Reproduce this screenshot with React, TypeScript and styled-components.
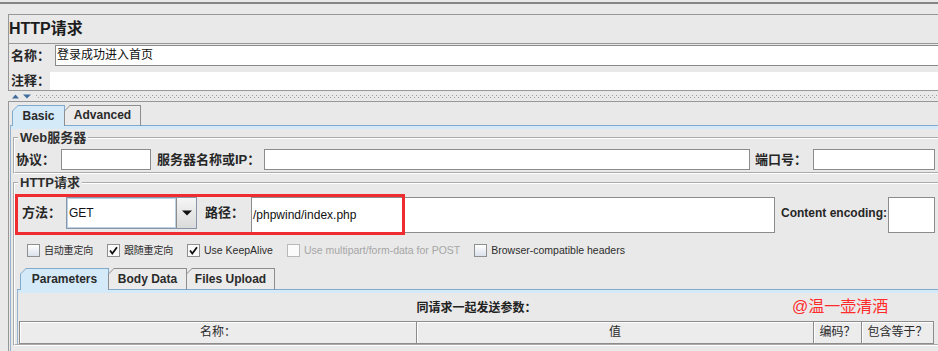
import React from 'react'
import styled, { createGlobalStyle } from 'styled-components'

const GlobalStyle = createGlobalStyle`
    html, body {
        margin: 0;
        padding: 0;
        background: #e9e9e9;
        overflow: hidden;
    }

    body {
        font-family: "Liberation Sans", "Noto Sans CJK SC", sans-serif;
        color: #222;
    }
`

const Page = styled.div`
    width: 950px;
    height: 351px;
    overflow: hidden;
    padding-top: 2px;
    box-sizing: border-box;
    display: flex;
    flex-direction: column;
`

const TopRule = styled.div`
    height: 2px;
    background: #858585;
    margin-bottom: 10px;
`

const HeaderPanel = styled.div`
    margin-left: 8px;
    border-left: 1px solid #979797;
    border-top: 1px solid #979797;
`

const Title = styled.div`
    height: 28px;
    line-height: 28px;
    font-size: 16px;
    font-weight: bold;
    color: #1c1c1c;
`

const FormBox = styled.div`
    border-top: 1px solid #979797;
    border-bottom: 1px solid #979797;
    padding-left: 2px;
`

const FormRow = styled.div<{ $top: number; $h: number }>`
    display: flex;
    align-items: center;
    margin-top: ${({ $top }) => $top}px;
    height: ${({ $h }) => $h}px;
`

const Label = styled.span<{ $w: number; $ml?: number; $size?: number }>`
    flex: none;
    width: ${({ $w }) => $w}px;
    margin-left: ${({ $ml }) => $ml ?? 0}px;
    font-size: ${({ $size }) => $size ?? 13}px;
    font-weight: bold;
    color: #262626;
    white-space: nowrap;
    line-height: 16px;
`

const NameInput = styled.div`
    flex: 1;
    height: 100%;
    box-sizing: border-box;
    background: #fff;
    border: 1px solid #8a8a8a;
    border-right: none;
    font-size: 12px;
    line-height: 19px;
    padding-left: 1px;
    color: #111;
`

const CommentArea = styled.div`
    flex: 1;
    height: 100%;
    background: #fff;
`

const Splitter = styled.div`
    height: 10px;
    margin-left: 8px;
    padding-left: 4px;
    display: flex;
    align-items: center;
    gap: 4px;
`

const Dots = styled.div`
    flex: 1;
    height: 3px;
    margin-top: 1px;
    background-image: linear-gradient(90deg, #9c9c9c 1px, transparent 1px),
        linear-gradient(90deg, #9c9c9c 1px, transparent 1px);
    background-size: 4px 1px, 4px 1px;
    background-position: 0 0, 2px 2px;
    background-repeat: repeat-x;
`

const LowerPanel = styled.div`
    flex: 1;
    margin-left: 8px;
    border-left: 1px solid #979797;
    border-top: 1px solid #979797;
    padding-top: 3px;
    display: flex;
    flex-direction: column;
`

const TabStrip = styled.div<{ $pl: number }>`
    display: flex;
    align-items: flex-end;
    padding-left: ${({ $pl }) => $pl}px;
    margin-bottom: -1px;
    position: relative;
    z-index: 1;
`

const TabOuter = styled.div<{ $w: number; $h: number; $active?: boolean }>`
    width: ${({ $w }) => $w}px;
    height: ${({ $h }) => $h}px;
    box-sizing: border-box;
    padding: 1px 1px 0 1px;
    margin-right: -1px;
    background: ${({ $active }) => ($active ? '#82a8cc' : '#8e8e8e')};
    clip-path: polygon(6px 0, 100% 0, 100% 100%, 0 100%, 0 6px);
`

const TabFace = styled.div<{ $active?: boolean }>`
    height: 100%;
    box-sizing: border-box;
    background: ${({ $active }) => ($active ? '#d4eaf9' : '#ebebeb')};
    border-bottom: ${({ $active }) => ($active ? 'none' : '1px solid #82a8cc')};
    clip-path: polygon(5px 0, 100% 0, 100% 100%, 0 100%, 0 5px);
    display: flex;
    align-items: center;
    justify-content: center;
    font-size: 12px;
    font-weight: bold;
    color: #2a2a2a;
    padding-bottom: 1px;
`

const Pane = styled.div<{ $ml: number }>`
    flex: 1;
    margin-left: ${({ $ml }) => $ml}px;
    border-top: 1px solid #82a8cc;
    border-left: 1px solid #98b2cb;
    box-shadow: inset 0 3px 0 #d4eaf9;
    display: flex;
    flex-direction: column;
`

const BasicPane = styled(Pane)`
    padding-left: 2px;
`

const Group = styled.fieldset<{ $top: number; $pb?: number }>`
    margin: ${({ $top }) => $top}px 0 0 0;
    padding: 0 0 ${({ $pb }) => $pb ?? 0}px 0;
    min-width: 0;
    border: 2px groove #ffffff;
    border-right: none;
    display: flex;
    flex-direction: column;
`

const Legend = styled.legend`
    margin-left: 3px;
    padding: 0 2px;
    font-size: 13px;
    line-height: 13px;
    font-weight: bold;
    color: #2e2e2e;
`

const Row = styled.div<{ $top: number; $h: number; $pl: number }>`
    position: relative;
    display: flex;
    align-items: center;
    margin-top: ${({ $top }) => $top}px;
    height: ${({ $h }) => $h}px;
    padding-left: ${({ $pl }) => $pl}px;
`

const Field = styled.div<{ $w: number; $h: number }>`
    flex: none;
    align-self: flex-start;
    width: ${({ $w }) => $w}px;
    height: ${({ $h }) => $h}px;
    box-sizing: border-box;
    background: #fff;
    border: 1px solid #8c8c8c;
    font-size: 12px;
    line-height: ${({ $h }) => $h - 2}px;
    padding-left: 1px;
    color: #111;
`

const CenterLabel = styled(Label)`
    align-self: flex-start;
    height: 32px;
    line-height: 32px;
`

const Combo = styled.div`
    flex: none;
    align-self: flex-start;
    display: flex;
    width: 131px;
    height: 32px;
    box-sizing: border-box;
    border: 1px solid #8796a8;
`

const ComboText = styled.div`
    flex: 1;
    background: #fff;
    border: 1px solid #bcd0e4;
    font-size: 12px;
    line-height: 28px;
    padding-left: 1px;
    color: #111;
`

const ComboButton = styled.div`
    width: 19px;
    border-left: 1px solid #8c8c8c;
    background: linear-gradient(#f5f5f5, #dadada);
    display: flex;
    align-items: center;
    justify-content: center;
`

const Annotation = styled.div`
    position: absolute;
    left: 0;
    top: -3px;
    width: 390px;
    height: 41px;
    box-sizing: border-box;
    border: 3px solid #ef2d30;
    pointer-events: none;
`

const OptionRow = styled.div`
    display: flex;
    align-items: center;
    margin-top: 11px;
    height: 13px;
    padding-left: 12px;
    gap: 14px;
`

const Option = styled.label<{ $disabled?: boolean }>`
    display: flex;
    align-items: center;
    gap: 4px;
    font-size: 10.5px;
    line-height: 13px;
    color: ${({ $disabled }) => ($disabled ? '#a6a6a6' : '#2c2c2c')};
    white-space: nowrap;
`

const CjkText = styled.span`
    font-size: 10px;
    letter-spacing: -0.2px;
`

const Box = styled.span<{ $checked?: boolean; $disabled?: boolean }>`
    width: 13px;
    height: 13px;
    box-sizing: border-box;
    border: 1px solid ${({ $disabled }) => ($disabled ? '#b9b9b9' : '#8e8f8f')};
    background: ${({ $checked, $disabled }) =>
        $checked || $disabled ? '#fbfbfb' : 'linear-gradient(#ffffff, #dbe2ec)'};
    display: flex;
    align-items: center;
    justify-content: center;
`

const Params = styled.div`
    flex: 1;
    margin-top: 11px;
    margin-left: 2px;
    display: flex;
    flex-direction: column;
`

const ParamsBody = styled(Pane)`
    position: relative;
    padding-top: 10px;
`

const Caption = styled.div`
    width: 915px;
    margin-left: 1px;
    height: 16px;
    line-height: 16px;
    text-align: center;
    font-size: 12px;
    font-weight: bold;
    color: #222;
    margin-bottom: 5px;
`

const Watermark = styled.div`
    position: absolute;
    left: 774px;
    top: 7px;
    font-size: 16px;
    line-height: 20px;
    color: #ff2b2b;
    white-space: nowrap;
`

const TableHead = styled.div`
    display: flex;
    width: 915px;
    margin-left: 1px;
    height: 23px;
    box-sizing: border-box;
    border: 1px solid #8c8c8c;
    border-right: none;
    background: #ececec;
`

const HeadCell = styled.div<{ $w: number }>`
    width: ${({ $w }) => $w}px;
    box-sizing: border-box;
    border-right: 1px solid #8c8c8c;
    box-shadow: inset 1px 1px 0 #fff;
    text-align: center;
    font-size: 12px;
    line-height: 21px;
    color: #2a2a2a;
`

const TableBody = styled.div`
    flex: 1;
    width: 915px;
    margin-left: 1px;
    box-sizing: border-box;
    border-left: 1px solid #8c8c8c;
    border-right: 1px solid #8c8c8c;
`

const Tab = ({ label, w, h, active }: { label: string; w: number; h: number; active?: boolean }) => (
    <TabOuter $w={w} $h={h} $active={active}>
        <TabFace $active={active}>{label}</TabFace>
    </TabOuter>
)

const Check = ({ checked, disabled, children }: { checked?: boolean; disabled?: boolean; children: React.ReactNode }) => (
    <Option $disabled={disabled}>
        <Box $checked={checked} $disabled={disabled}>
            {checked && (
                <svg width="9" height="9" viewBox="0 0 9 9">
                    <path d="M1 4.5 L3.3 7.5 L8 1.2" fill="none" stroke="#111" strokeWidth="1.8" />
                </svg>
            )}
        </Box>
        {children}
    </Option>
)

const App = () => {
    return (
        <>
            <GlobalStyle />
            <Page>
                <TopRule />
                <HeaderPanel>
                    <Title>HTTP请求</Title>
                    <FormBox>
                        <FormRow $top={1} $h={21}>
                            <Label $w={44}>名称：</Label>
                            <NameInput>登录成功进入首页</NameInput>
                        </FormRow>
                        <FormRow $top={6} $h={18}>
                            <Label $w={39}>注释：</Label>
                            <CommentArea />
                        </FormRow>
                    </FormBox>
                </HeaderPanel>

                <Splitter>
                    <svg width="20" height="5" viewBox="0 0 20 5">
                        <polygon points="0,4.5 3.5,0.5 7,4.5" fill="#416d9c" />
                        <polygon points="11,0.5 19,0.5 15,4.5" fill="#416d9c" />
                    </svg>
                    <Dots />
                </Splitter>

                <LowerPanel>
                    <TabStrip $pl={3}>
                        <Tab label="Basic" w={53} h={21} active />
                        <Tab label="Advanced" w={77} h={21} />
                    </TabStrip>
                    <BasicPane $ml={1}>
                        <Group $top={5} $pb={2}>
                            <Legend>Web服务器</Legend>
                            <Row $top={5} $h={21} $pl={1}>
                                <Label $w={45}>协议：</Label>
                                <Field $w={90} $h={21} />
                                <Label $w={107} $ml={6}>服务器名称或IP：</Label>
                                <Field $w={486} $h={21} />
                                <Label $w={58} $ml={5}>端口号：</Label>
                                <Field $w={122} $h={21} />
                            </Row>
                        </Group>

                        <Group $top={2}>
                            <Legend>HTTP请求</Legend>
                            <Row $top={8} $h={36} $pl={7}>
                                <CenterLabel $w={44}>方法：</CenterLabel>
                                <Combo>
                                    <ComboText>GET</ComboText>
                                    <ComboButton>
                                        <svg width="10" height="6" viewBox="0 0 10 6">
                                            <polygon points="0,0.5 10,0.5 5,5.5" fill="#111" />
                                        </svg>
                                    </ComboButton>
                                </Combo>
                                <CenterLabel $w={46} $ml={8}>路径：</CenterLabel>
                                <Field $w={524} $h={36}>/phpwind/index.php</Field>
                                <CenterLabel $w={107} $ml={6} $size={12}>Content encoding:</CenterLabel>
                                <Field $w={47} $h={36} />
                                <Annotation />
                            </Row>

                            <OptionRow>
                                <Check><CjkText>自动重定向</CjkText></Check>
                                <Check checked><CjkText>跟随重定向</CjkText></Check>
                                <Check checked>Use KeepAlive</Check>
                                <Check disabled>Use multipart/form-data for POST</Check>
                                <Check>Browser-compatible headers</Check>
                            </OptionRow>

                            <Params>
                                <TabStrip $pl={3}>
                                    <Tab label="Parameters" w={89} h={22} active />
                                    <Tab label="Body Data" w={79} h={22} />
                                    <Tab label="Files Upload" w={89} h={22} />
                                </TabStrip>
                                <ParamsBody $ml={0}>
                                    <Caption>同请求一起发送参数：</Caption>
                                    <TableHead>
                                        <HeadCell $w={397}>名称：</HeadCell>
                                        <HeadCell $w={397}>值</HeadCell>
                                        <HeadCell $w={48}>编码？</HeadCell>
                                        <HeadCell $w={72}>包含等于？</HeadCell>
                                    </TableHead>
                                    <TableBody />
                                    <Watermark>@温一壶清酒</Watermark>
                                </ParamsBody>
                            </Params>
                        </Group>
                    </BasicPane>
                </LowerPanel>
            </Page>
        </>
    )
}

export default App
